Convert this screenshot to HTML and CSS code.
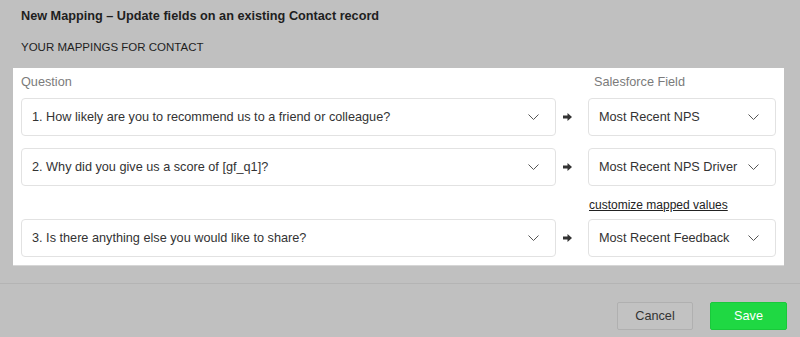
FILE: index.html
```html
<!DOCTYPE html>
<html>
<head>
<meta charset="utf-8">
<link rel="stylesheet" href="styles.css">
</head>
<body>
<div class="modal">
  <h1 class="title">New Mapping – Update fields on an existing Contact record</h1>
  <h2 class="subtitle">YOUR MAPPINGS FOR CONTACT</h2>
  <div class="panel">
    <div class="grid">
      <div class="label">Question</div>
      <div></div>
      <div class="label sf">Salesforce Field</div>

      <div class="select"><span>1. How likely are you to recommend us to a friend or colleague?</span><svg class="chev" viewBox="0 0 11 6"><path d="M0.5 0.5 L5.5 5.5 L10.5 0.5"/></svg></div>
      <div class="arrow"><svg viewBox="0 0 9 8"><path d="M0 2.5 H4.5 V0 L9 4 L4.5 8 V5.5 H0 Z"/></svg></div>
      <div class="select"><span>Most Recent NPS</span><svg class="chev" viewBox="0 0 11 6"><path d="M0.5 0.5 L5.5 5.5 L10.5 0.5"/></svg></div>

      <div class="select gap"><span>2. Why did you give us a score of [gf_q1]?</span><svg class="chev" viewBox="0 0 11 6"><path d="M0.5 0.5 L5.5 5.5 L10.5 0.5"/></svg></div>
      <div class="arrow gap"><svg viewBox="0 0 9 8"><path d="M0 2.5 H4.5 V0 L9 4 L4.5 8 V5.5 H0 Z"/></svg></div>
      <div class="select gap"><span>Most Recent NPS Driver</span><svg class="chev" viewBox="0 0 11 6"><path d="M0.5 0.5 L5.5 5.5 L10.5 0.5"/></svg></div>

      <div></div>
      <div></div>
      <div class="linkrow"><a class="link" href="#">customize mapped values</a></div>

      <div class="select"><span>3. Is there anything else you would like to share?</span><svg class="chev" viewBox="0 0 11 6"><path d="M0.5 0.5 L5.5 5.5 L10.5 0.5"/></svg></div>
      <div class="arrow"><svg viewBox="0 0 9 8"><path d="M0 2.5 H4.5 V0 L9 4 L4.5 8 V5.5 H0 Z"/></svg></div>
      <div class="select"><span>Most Recent Feedback</span><svg class="chev" viewBox="0 0 11 6"><path d="M0.5 0.5 L5.5 5.5 L10.5 0.5"/></svg></div>
    </div>
  </div>
  <div class="footer">
    <button class="btn cancel">Cancel</button>
    <button class="btn save">Save</button>
  </div>
</div>
</body>
</html>
```

FILE: styles.css
```css
html, body {
  margin: 0;
  padding: 0;
  background: #c0c0c0;
  font-family: "Liberation Sans", Arial, Helvetica, sans-serif;
  color: #222;
}
.modal {
  width: 800px;
  height: 337px;
  overflow: hidden;
}
.title {
  margin: 0;
  padding: 8px 0 0 21px;
  font-size: 12.7px;
  line-height: 16px;
  font-weight: bold;
  color: #1e1e1e;
}
.subtitle {
  margin: 0;
  padding: 15px 0 0 21px;
  font-size: 11.5px;
  line-height: 16px;
  font-weight: normal;
  color: #1e1e1e;
}
.panel {
  margin: 13px 16px 0 13px;
  background: #fff;
  padding: 6px 8px 8px 8px;
  box-shadow: 0 1px 0 #d6d6d6;
}
.grid {
  display: grid;
  grid-template-columns: 535px 32px 188px;
}
.label {
  font-size: 12.7px;
  line-height: 16px;
  color: #7b7b7b;
  padding: 0 0 8px 0;
}
.label.sf {
  padding-left: 6px;
}
.select {
  height: 38px;
  box-sizing: border-box;
  border: 1px solid #e2e2e2;
  border-radius: 4px;
  display: flex;
  align-items: center;
  justify-content: space-between;
  padding: 0 16px 0 10px;
  font-size: 12.7px;
  color: #333;
}
.gap {
  margin-top: 12px;
}
.chev {
  width: 11px;
  height: 6px;
  flex: none;
}
.chev path {
  fill: none;
  stroke: #555;
  stroke-width: 1;
}
.arrow {
  height: 38px;
  display: flex;
  align-items: center;
  padding-left: 7px;
}
.arrow svg {
  width: 9px;
  height: 8px;
}
.arrow path {
  fill: #333;
}
.linkrow {
  height: 33px;
  box-sizing: border-box;
  padding: 11px 0 0 1px;
  line-height: 14px;
}
.link {
  font-size: 12px;
  color: #222;
  text-decoration: underline;
}
.footer {
  margin-top: 18px;
  border-top: 1px solid #b4b4b4;
  display: flex;
  justify-content: flex-end;
  gap: 17px;
  padding: 18px 13px 0 0;
}
.btn {
  height: 28px;
  font-family: "Liberation Sans", Arial, sans-serif;
  font-size: 12.7px;
  border-radius: 2px;
  padding: 0;
  cursor: pointer;
}
.cancel {
  width: 76px;
  background: #c2c2c2;
  border: 1px solid #b0b0b0;
  color: #333;
}
.save {
  width: 77px;
  background: #1fd843;
  border: 1px solid #19c93b;
  color: #fff;
}
```
